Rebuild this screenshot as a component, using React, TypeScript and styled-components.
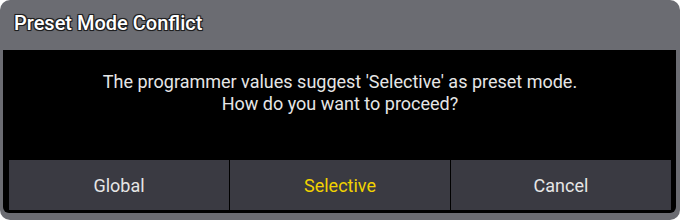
import React from "react";
import styled, { createGlobalStyle } from "styled-components";

const GlobalStyle = createGlobalStyle`
    html, body {
        margin: 0;
        padding: 0;
        background: #ffffff;
    }
    body {
        font-family: Roboto, "Liberation Sans", sans-serif;
    }
`;

const Frame = styled.div`
    width: 680px;
    height: 220px;
    box-sizing: border-box;
    background: #6b6c72;
    border-radius: 10px;
    display: flex;
    flex-direction: column;
    padding: 0 4px 7px 3px;
`;

const TitleBar = styled.div`
    height: 50px;
    display: flex;
    align-items: center;
    padding-left: 11px;
    padding-bottom: 4px;
    box-sizing: border-box;
`;

const Title = styled.h1`
    margin: 0;
    font-size: 20px;
    font-weight: 500;
    color: #ffffff;
    text-shadow: -1px -1px 0 #1e1e20, 1px -1px 0 #1e1e20, -1px 1px 0 #1e1e20,
        1px 1px 0 #1e1e20, 0 0 2px #000;
`;

const Body = styled.div`
    flex: 1;
    background: #000000;
    border-radius: 0 0 6px 6px;
    display: flex;
    flex-direction: column;
    padding: 0 5px 3px 6px;
`;

const Message = styled.p`
    flex: 1;
    margin: 0;
    padding-top: 21px;
    text-align: center;
    color: #e6e6e6;
    font-size: 18px;
    line-height: 22px;
`;

const ButtonRow = styled.div`
    display: grid;
    grid-template-columns: repeat(3, 1fr);
    gap: 1px;
    height: 50px;
`;

const Button = styled.button<{ $active?: boolean }>`
    border: none;
    margin: 0;
    padding: 0;
    background: #3a3a42;
    color: ${(p) => (p.$active ? "#f2d200" : "#e6e6e6")};
    font-family: Roboto, "Liberation Sans", sans-serif;
    font-size: 18px;
    cursor: pointer;
`;

export default function App() {
    return (
        <>
            <GlobalStyle />
            <Frame>
                <TitleBar>
                    <Title>Preset Mode Conflict</Title>
                </TitleBar>
                <Body>
                    <Message>
                        The programmer values suggest 'Selective' as preset mode.
                        <br />
                        How do you want to proceed?
                    </Message>
                    <ButtonRow>
                        <Button>Global</Button>
                        <Button $active>Selective</Button>
                        <Button>Cancel</Button>
                    </ButtonRow>
                </Body>
            </Frame>
        </>
    );
}
